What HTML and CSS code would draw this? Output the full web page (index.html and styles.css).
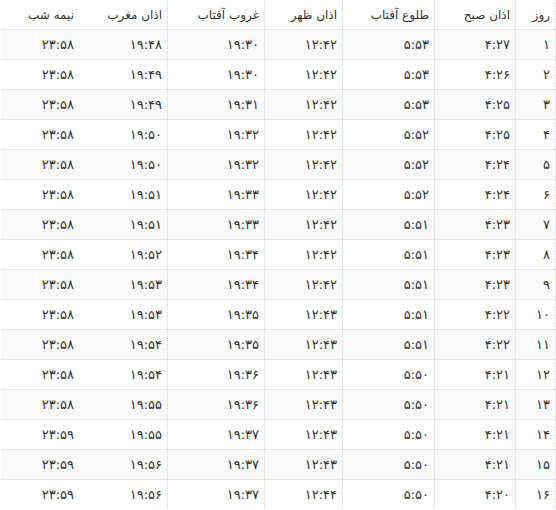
FILE: index.html
```html
<!DOCTYPE html>
<html lang="fa" dir="rtl">
<head>
<meta charset="utf-8">
<link rel="stylesheet" href="styles.css">
</head>
<body>
<table class="times">
<colgroup>
<col class="c-day"><col class="c-fajr"><col class="c-sunrise"><col class="c-dhuhr"><col class="c-sunset"><col class="c-maghrib"><col class="c-mid">
</colgroup>
<thead>
<tr><th>روز</th><th>اذان صبح</th><th>طلوع آفتاب</th><th>اذان ظهر</th><th>غروب آفتاب</th><th>اذان مغرب</th><th>نیمه شب</th></tr>
</thead>
<tbody>
<tr><td>۱</td><td>۴:۲۷</td><td>۵:۵۳</td><td>۱۲:۴۲</td><td>۱۹:۳۰</td><td>۱۹:۴۸</td><td>۲۳:۵۸</td></tr>
<tr><td>۲</td><td>۴:۲۶</td><td>۵:۵۳</td><td>۱۲:۴۲</td><td>۱۹:۳۰</td><td>۱۹:۴۹</td><td>۲۳:۵۸</td></tr>
<tr><td>۳</td><td>۴:۲۵</td><td>۵:۵۳</td><td>۱۲:۴۲</td><td>۱۹:۳۱</td><td>۱۹:۴۹</td><td>۲۳:۵۸</td></tr>
<tr><td>۴</td><td>۴:۲۵</td><td>۵:۵۲</td><td>۱۲:۴۲</td><td>۱۹:۳۲</td><td>۱۹:۵۰</td><td>۲۳:۵۸</td></tr>
<tr><td>۵</td><td>۴:۲۴</td><td>۵:۵۲</td><td>۱۲:۴۲</td><td>۱۹:۳۲</td><td>۱۹:۵۰</td><td>۲۳:۵۸</td></tr>
<tr><td>۶</td><td>۴:۲۴</td><td>۵:۵۲</td><td>۱۲:۴۲</td><td>۱۹:۳۳</td><td>۱۹:۵۱</td><td>۲۳:۵۸</td></tr>
<tr><td>۷</td><td>۴:۲۳</td><td>۵:۵۱</td><td>۱۲:۴۲</td><td>۱۹:۳۳</td><td>۱۹:۵۱</td><td>۲۳:۵۸</td></tr>
<tr><td>۸</td><td>۴:۲۳</td><td>۵:۵۱</td><td>۱۲:۴۲</td><td>۱۹:۳۴</td><td>۱۹:۵۲</td><td>۲۳:۵۸</td></tr>
<tr><td>۹</td><td>۴:۲۳</td><td>۵:۵۱</td><td>۱۲:۴۲</td><td>۱۹:۳۴</td><td>۱۹:۵۳</td><td>۲۳:۵۸</td></tr>
<tr><td>۱۰</td><td>۴:۲۲</td><td>۵:۵۱</td><td>۱۲:۴۳</td><td>۱۹:۳۵</td><td>۱۹:۵۳</td><td>۲۳:۵۸</td></tr>
<tr><td>۱۱</td><td>۴:۲۲</td><td>۵:۵۱</td><td>۱۲:۴۳</td><td>۱۹:۳۵</td><td>۱۹:۵۴</td><td>۲۳:۵۸</td></tr>
<tr><td>۱۲</td><td>۴:۲۱</td><td>۵:۵۰</td><td>۱۲:۴۳</td><td>۱۹:۳۶</td><td>۱۹:۵۴</td><td>۲۳:۵۸</td></tr>
<tr><td>۱۳</td><td>۴:۲۱</td><td>۵:۵۰</td><td>۱۲:۴۳</td><td>۱۹:۳۶</td><td>۱۹:۵۵</td><td>۲۳:۵۸</td></tr>
<tr><td>۱۴</td><td>۴:۲۱</td><td>۵:۵۰</td><td>۱۲:۴۳</td><td>۱۹:۳۷</td><td>۱۹:۵۵</td><td>۲۳:۵۹</td></tr>
<tr><td>۱۵</td><td>۴:۲۱</td><td>۵:۵۰</td><td>۱۲:۴۳</td><td>۱۹:۳۷</td><td>۱۹:۵۶</td><td>۲۳:۵۹</td></tr>
<tr><td>۱۶</td><td>۴:۲۰</td><td>۵:۵۰</td><td>۱۲:۴۴</td><td>۱۹:۳۷</td><td>۱۹:۵۶</td><td>۲۳:۵۹</td></tr>
</tbody>
</table>
</body>
</html>
```
FILE: styles.css
```css
html, body {
  margin: 0;
  padding: 0;
  background: #fff;
}
body {
  font-family: "DejaVu Sans", Tahoma, sans-serif;
  font-size: 13px;
  color: #333;
  overflow: hidden;
}
.times {
  direction: rtl;
  width: 555px;
  table-layout: fixed;
  border-collapse: separate;
  border-spacing: 0;
}
.c-day { width: 40px; }
.c-fajr { width: 81px; }
.c-sunrise { width: 92px; }
.c-dhuhr { width: 78px; }
.c-sunset { width: 97px; }
.c-maghrib { width: 89px; }
.c-mid { width: 78px; }
.times th,
.times td {
  text-align: right;
  font-weight: normal;
  padding: 0 5px 0 0;
  border-right: 1px dotted #d6d6d6;
  white-space: nowrap;
  overflow: hidden;
}
.times th {
  height: 29px;
  font-size: 12px;
}
.times td {
  height: 29px;
  border-top: 1px solid #e8e8e8;
}
.times th:last-child,
.times td:last-child {
  border-right: none;
}
.times tbody tr:nth-child(odd) td {
  background: #f9f9f9;
}
```
